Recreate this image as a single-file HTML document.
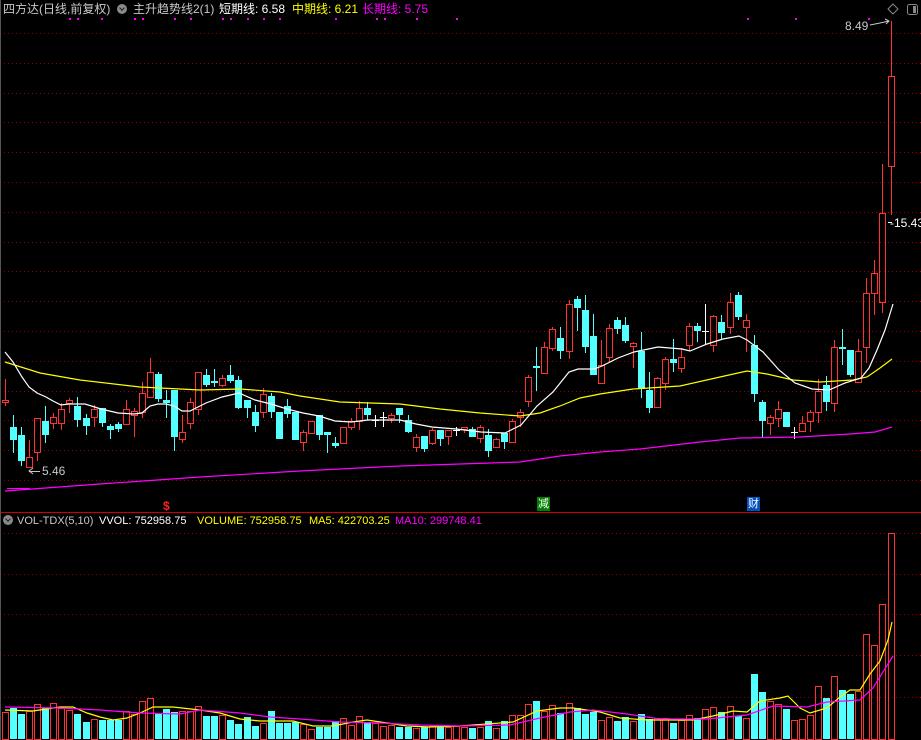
<!DOCTYPE html>
<html><head><meta charset="utf-8">
<style>
html,body{margin:0;padding:0;background:#000;}
body{width:921px;height:740px;overflow:hidden;position:relative;font-family:"Liberation Sans","Noto Sans CJK SC",sans-serif;}
.t{position:absolute;font-size:12px;white-space:nowrap;line-height:14px;}
.v{font-size:11px;}
svg{position:absolute;left:0;top:0;}
.ic{position:absolute;width:10px;height:10px;border-radius:50%;background:#8a8a8a;}
.ic:after{content:"";position:absolute;left:2.5px;top:2px;width:3px;height:3px;border-right:1.5px solid #222;border-bottom:1.5px solid #222;transform:rotate(45deg);}
</style></head><body>
<svg id="s" width="921" height="740" xmlns="http://www.w3.org/2000/svg"></svg>
<div class="t" style="left:3px;top:2px;color:#c8c8c8">四方达(日线,前复权)</div>
<div class="ic" style="left:117px;top:4px"></div>
<div class="t" style="left:133px;top:2px;color:#c8c8c8">主升趋势线2(1)</div>
<div class="t" style="left:219px;top:2px;color:#fff">短期线: 6.58</div>
<div class="t" style="left:292px;top:2px;color:#ffff00">中期线: 6.21</div>
<div class="t" style="left:362px;top:2px;color:#ff00ff">长期线: 5.75</div>
<div class="t" style="left:845px;top:19px;color:#c8c8c8">8.49</div>
<div class="t" style="left:890px;top:216px;color:#fff">-15.43</div>
<div class="t" style="left:42px;top:464px;color:#c8c8c8">5.46</div>
<div class="t" style="left:163px;top:499px;color:#ff2020;font-size:12px;font-weight:bold">$</div>
<div class="t" style="left:537px;top:497px;color:#fff;background:#008000;font-size:11px;padding:0 1px">减</div>
<div class="t" style="left:747px;top:497px;color:#fff;background:#0050c0;font-size:11px;padding:0 1px">财</div>
<div class="ic" style="left:3px;top:515px"></div>
<div class="t v" style="left:17px;top:514px;color:#c8c8c8">VOL-TDX(5,10)</div>
<div class="t v" style="left:99px;top:514px;color:#fff">VVOL: 752958.75</div>
<div class="t v" style="left:197px;top:514px;color:#ffff00">VOLUME: 752958.75</div>
<div class="t v" style="left:309px;top:514px;color:#ffff00">MA5: 422703.25</div>
<div class="t v" style="left:395px;top:514px;color:#ff00ff">MA10: 299748.41</div>
<script>
var C=[[400,402,379,406,'r'],[427,440,415,453,'c'],[435,461,427,466,'c'],[457,467,440,467,'r'],[418,452,418,461,'r'],[421,435,406,443,'c'],[417,423,413,429,'r'],[409,423,403,430,'r'],[400,403,398,413,'r'],[406,420,397,427,'c'],[418,426,414,435,'c'],[409,417,405,427,'r'],[408,423,408,427,'c'],[426,430,424,439,'c'],[424,429,422,432,'c'],[409,424,400,424,'r'],[411,415,408,437,'r'],[393,412,382,418,'r'],[372,397,358,398,'r'],[374,399,372,402,'c'],[400,403,390,418,'c'],[390,437,390,451,'c'],[432,439,415,443,'r'],[402,423,398,429,'r'],[372,409,372,415,'r'],[375,385,369,387,'c'],[381,383,369,387,'c'],[378,385,375,387,'r'],[375,381,365,383,'c'],[380,408,376,409,'c'],[400,408,400,418,'c'],[412,426,405,432,'c'],[394,412,388,418,'r'],[396,412,393,418,'c'],[412,439,412,439,'c'],[406,414,399,418,'c'],[412,440,412,440,'c'],[432,442,430,451,'r'],[421,433,421,433,'r'],[415,435,415,440,'c'],[432,435,432,453,'c'],[443,446,437,448,'c'],[427,443,427,443,'r'],[421,427,418,430,'r'],[408,421,401,430,'r'],[408,415,402,420,'c'],[420,420,415,427,'w'],[417,417,412,427,'w'],[415,418,413,423,'r'],[408,415,408,423,'c'],[420,432,415,433,'c'],[437,447,434,452,'r'],[436,449,436,452,'c'],[430,443,428,445,'r'],[430,439,430,446,'c'],[430,436,430,445,'r'],[430,430,427,436,'w'],[427,429,427,433,'r'],[429,437,427,437,'c'],[427,438,425,443,'r'],[435,451,429,457,'c'],[439,447,438,447,'r'],[433,442,433,449,'c'],[421,442,419,443,'r'],[412,417,409,427,'r'],[377,401,375,407,'r'],[366,367,347,391,'c'],[347,373,342,373,'r'],[329,348,327,351,'r'],[338,351,327,359,'c'],[304,351,300,359,'r'],[299,308,296,331,'c'],[310,347,295,353,'c'],[336,375,314,375,'c'],[365,383,340,383,'r'],[328,357,324,362,'r'],[320,329,317,334,'c'],[325,341,317,343,'c'],[343,346,342,368,'r'],[351,389,332,398,'c'],[390,408,372,413,'c'],[378,407,377,408,'r'],[359,383,357,390,'r'],[359,363,339,372,'c'],[357,368,348,373,'r'],[326,345,323,351,'r'],[326,331,323,342,'c'],[331,331,304,345,'w'],[316,345,315,352,'r'],[322,333,315,339,'c'],[302,327,293,334,'r'],[295,317,292,320,'c'],[320,327,314,352,'r'],[345,394,335,402,'c'],[402,421,400,438,'c'],[417,423,415,435,'r'],[409,418,401,427,'r'],[412,427,412,427,'c'],[432,432,427,439,'w'],[423,431,416,431,'r'],[412,421,410,432,'r'],[391,412,379,423,'r'],[385,402,376,411,'c'],[347,403,340,412,'r'],[347,349,329,365,'c'],[350,375,350,377,'c'],[351,382,339,382,'r'],[293,347,278,363,'r'],[273,293,260,315,'r'],[213,302,164,313,'r'],[76,166,21,215,'r']];
var V=[712,708,714,711,704,708,703,708,710,714,722,719,720,720,720,711,714,701,698,713,709,712,711,711,706,716,716,715,720,724,717,726,723,711,723,723,722,724,729,727,727,721,718,725,716,722,723,726,725,727,727,728,727,726,727,727,726,727,728,727,721,728,721,715,715,704,701,711,705,713,703,708,714,712,720,717,721,717,721,714,719,718,718,723,720,715,718,709,707,712,706,716,718,674,692,701,704,709,720,719,715,686,698,676,690,694,691,634,645,604,533];
var s='';
function X(i){return Math.round(5+i*8.05);}
for(var k=0;k<16;k++){var y=Math.round(33+k*29.8)+0.5;s+='<line x1="4" y1="'+y+'" x2="921" y2="'+y+'" stroke="#9a0000" stroke-dasharray="1,3"/>';}
[533,574,614,655,697].forEach(function(y){s+='<line x1="4" y1="'+(y+.5)+'" x2="921" y2="'+(y+.5)+'" stroke="#9a0000" stroke-dasharray="1,3"/>';});
s+='<line x1="0" y1="512.5" x2="921" y2="512.5" stroke="#d00000"/>';
s+='<line x1="0.5" y1="0" x2="0.5" y2="740" stroke="#555"/>';
[69,77,101,134,142,174,190,222,230,247,263,279,335,376,384,416,456,747,795,868].forEach(function(x){s+='<rect x="'+x+'" y="18" width="2" height="2" fill="#ff00ff"/>';});
C.forEach(function(c,i){var x=X(i),t=c[0],b=c[1],h=c[2],l=c[3],ty=c[4];
 if(ty=='w'){s+='<line x1="'+(x+.5)+'" y1="'+h+'" x2="'+(x+.5)+'" y2="'+l+'" stroke="#fff"/><line x1="'+(x-3)+'" y1="'+(t+.5)+'" x2="'+(x+4)+'" y2="'+(t+.5)+'" stroke="#fff"/>';return;}
 if(ty=='r'){s+='<line x1="'+(x+.5)+'" y1="'+h+'" x2="'+(x+.5)+'" y2="'+t+'" stroke="#ff3232"/><line x1="'+(x+.5)+'" y1="'+b+'" x2="'+(x+.5)+'" y2="'+l+'" stroke="#ff3232"/>';
   s+='<rect x="'+(x-2.5)+'" y="'+(t+.5)+'" width="6" height="'+Math.max(b-t,1)+'" fill="none" stroke="#ff3232"/>';}
 else{s+='<line x1="'+(x+.5)+'" y1="'+h+'" x2="'+(x+.5)+'" y2="'+l+'" stroke="#54ffff"/><rect x="'+(x-3)+'" y="'+t+'" width="7" height="'+Math.max(b-t,2)+'" fill="#54ffff"/>';}
});
function pl(p,c){return '<polyline fill="none" stroke="'+c+'" stroke-width="1.2" points="'+p+'"/>';}
s+=pl("5,491 100,484 200,477 300,471 400,466 520,462 560,456 600,452 640,449 700,442 740,438 800,437 850,434 875,432 892,427","#ff00ff");
s+=pl("5,362 40,373 80,380 140,387 200,390 240,389 280,392 300,396 340,402 400,404 440,409 480,413 520,416 540,413 560,406 580,398 600,394 633,389 680,386 720,377 747,371 767,374 793,380 820,382 853,380 867,377 880,368 892,359","#ffff00");
s+=pl("5,352 13,362 22,377 29,387 37,393 46,397 53,401 61,405 69,404 85,404 101,409 118,413 134,414 142,413 150,406 158,404 166,404 174,406 182,411 190,411 198,407 206,403 222,397 239,393 255,400 271,404 287,409 303,413 319,416 335,421 351,422 368,420 400,420 416,424 432,427 456,429 481,432 505,433 521,425 537,406 553,392 561,382 569,372 578,369 594,369 602,366 618,358 634,352 658,347 682,349 690,351 707,344 723,339 739,336 747,340 763,352 779,370 795,383 812,389 829,390 845,383 861,378 869,368 877,350 885,330 893,304","#ffffff");
V.forEach(function(v,i){var x=X(i),c=C[i][4];
 if(c=='c'){s+='<rect x="'+(x-3)+'" y="'+v+'" width="7" height="'+(739-v)+'" fill="#54ffff"/>';}
 else{s+='<rect x="'+(x-2.5)+'" y="'+(v+.5)+'" width="6" height="'+(739-v)+'" fill="none" stroke="#ff3232"/>';}
});
s+=pl("5,710 33,711 60,707 73,707 87,713 100,717 113,720 127,718 140,713 153,707 173,707 200,710 220,713 240,719 260,721 293,721 313,726 333,726 353,722 367,720 387,723 407,726 430,727 460,726 513,722 537,711 560,708 573,708 600,712 620,718 647,720 693,720 713,716 733,711 747,712 760,701 780,698 788,696 800,708 810,713 827,708 840,697 850,690 860,690 870,674 880,661 888,640 892,622","#ffff00");
s+=pl("5,707 60,708 100,710 140,713 180,714 200,710 240,713 270,717 300,719 340,722 380,723 420,725 460,726 510,725 540,718 570,712 593,710 627,714 660,719 707,719 747,715 773,706 807,707 827,702 860,700 873,688 893,656","#ff00ff");
s+='<polyline fill="none" stroke="#c8c8c8" points="870,25 880,23 889,21"/><polyline fill="none" stroke="#c8c8c8" points="885,19 889,21 886,24"/>';
s+='<line x1="888" y1="222.5" x2="892" y2="222.5" stroke="#fff"/>';
s+='<line x1="29" y1="471.5" x2="40" y2="471.5" stroke="#c8c8c8"/><polyline fill="none" stroke="#c8c8c8" points="33,468 29,471 33,474"/>';
s+='<rect x="7" y="488" width="23" height="1" fill="#ff00ff"/>';
s+='<polygon points="893,4 898,9 893,14 888,9" fill="none" stroke="#888"/><rect x="907.5" y="4.5" width="10" height="10" rx="2" fill="none" stroke="#888"/><rect x="913" y="6" width="3" height="7" fill="#888"/>';
document.getElementById('s').innerHTML=s;
</script>
</body></html>
